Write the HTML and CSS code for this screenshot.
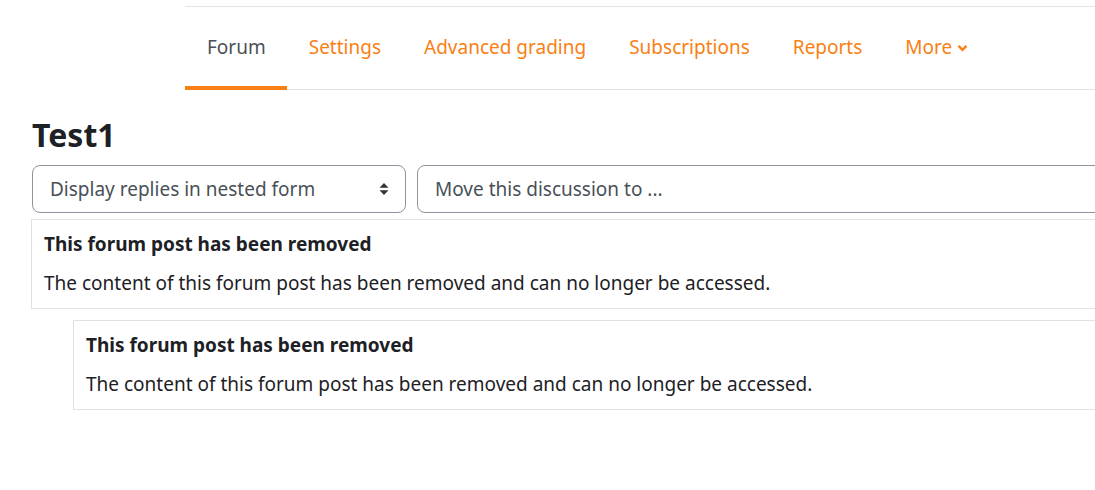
FILE: index.html
```html
<!DOCTYPE html>
<html>
<head>
<meta charset="utf-8">
<link rel="stylesheet" href="styles.css">
</head>
<body>
<div class="page">
  <nav class="tabs">
    <a class="tab active">Forum</a>
    <a class="tab">Settings</a>
    <a class="tab">Advanced grading</a>
    <a class="tab">Subscriptions</a>
    <a class="tab">Reports</a>
    <a class="tab">More <svg class="chev" width="11" height="8" viewBox="0 0 11 8"><path d="M1.5 1.8 L5.5 5.8 L9.5 1.8" fill="none" stroke="currentColor" stroke-width="2.4"/></svg></a>
  </nav>
  <main class="main">
    <h1 class="title">Test1</h1>
    <div class="controls">
      <div class="select">Display replies in nested form
        <svg class="updown" width="10" height="14" viewBox="0 0 10 14"><path d="M5 1 L9.5 5.8 H0.5 Z M5 13 L9.5 8.2 H0.5 Z" fill="#333"/></svg>
      </div>
      <div class="input">Move this discussion to ...</div>
    </div>
    <div class="post">
      <div class="post-title">This forum post has been removed</div>
      <div class="post-body">The content of this forum post has been removed and can no longer be accessed.</div>
    </div>
    <div class="reply">
      <div class="post">
        <div class="post-title">This forum post has been removed</div>
        <div class="post-body">The content of this forum post has been removed and can no longer be accessed.</div>
      </div>
    </div>
  </main>
</div>
</body>
</html>
```
FILE: styles.css
```css
html, body {
  margin: 0;
  padding: 0;
  background: #fff;
  overflow: hidden;
}
body {
  font-family: "Noto Sans", "Open Sans", sans-serif;
  color: #1d2125;
  width: 1095px;
  height: 490px;
}
.page {
  width: 1300px;
  padding-top: 6px;
}
.tabs {
  margin-left: 185px;
  display: flex;
  height: 82px;
  border-top: 1px solid #e2e4e8;
  border-bottom: 1px solid #dee2e6;
  box-sizing: content-box;
}
.tab {
  display: flex;
  align-items: center;
  padding: 1px 21px 0 22px;
  font-size: 19px;
  color: #f98012;
  border-bottom: 4px solid transparent;
  margin-bottom: -1px;
}
.tab.active {
  color: #495057;
  border-bottom-color: #f98012;
}
.chev {
  margin-left: 5px;
  margin-top: 1px;
}
.main {
  padding-left: 31px;
}
.title {
  margin: 25px 0 0 1px;
  font-size: 32px;
  font-weight: 700;
  line-height: 40px;
  color: #1d2125;
}
.controls {
  display: flex;
  gap: 11px;
  margin-top: 10px;
  margin-left: 1px;
}
.select, .input {
  height: 48px;
  box-sizing: border-box;
  border: 1px solid #8f959e;
  border-radius: 8px;
  display: flex;
  align-items: center;
  padding: 0 17px;
  font-size: 19px;
  color: #495057;
}
.select {
  width: 374px;
  justify-content: space-between;
  padding-right: 16px;
}
.input {
  flex: 1;
}
.post {
  border: 1px solid #dee2e6;
  padding: 11px 12px 0;
  height: 90px;
  box-sizing: border-box;
  margin-top: 6px;
}
.post-title {
  font-weight: 700;
  font-size: 19px;
  line-height: 26px;
  color: #1d2125;
}
.post-body {
  margin-top: 13px;
  font-size: 19px;
  line-height: 26px;
  color: #1d2125;
}
.reply {
  padding-left: 42px;
  margin-top: 11px;
}
.reply .post {
  margin-top: 0;
}
```
